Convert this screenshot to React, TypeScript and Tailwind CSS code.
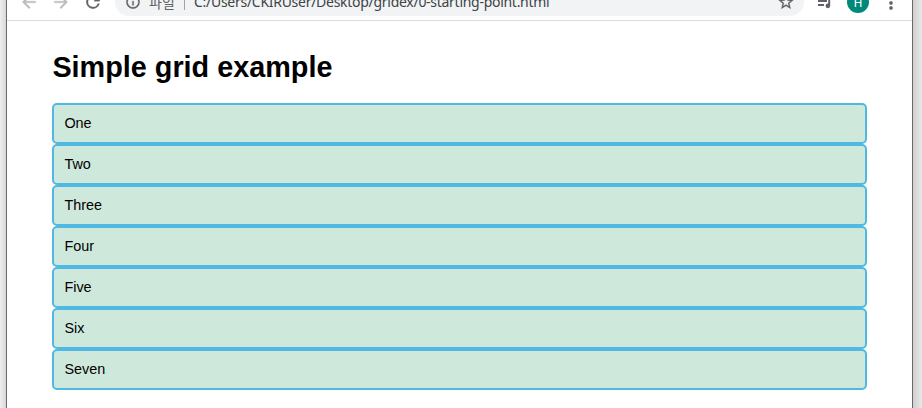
import React from "react";

const items = ["One", "Two", "Three", "Four", "Five", "Six", "Seven"];

type IconProps = { d: string; className: string };

function Icon({ d, className }: IconProps) {
  return (
    <svg viewBox="0 0 24 24" fill="currentColor" stroke="currentColor" strokeWidth="0.4" className={`shrink-0 ${className}`}>
      <path d={d} />
    </svg>
  );
}

function Toolbar() {
  return (
    <div className="-mt-4 flex h-[37px] shrink-0 items-center border-b border-[#dadce0] bg-white pl-3 text-[#5f6368]">
      <div className="flex gap-3">
        <Icon className="size-5 text-[#babcbe]" d="M20 11H7.83l5.59-5.59L12 4l-8 8 8 8 1.41-1.41L7.83 13H20v-2z" />
        <Icon className="size-5 text-[#babcbe]" d="M12 4l-1.41 1.41L16.17 11H4v2h12.17l-5.58 5.59L12 20l8-8z" />
        <Icon className="size-5" d="M17.65 6.35A7.96 7.96 0 0 0 12 4a8 8 0 1 0 7.73 10h-2.08A6 6 0 1 1 12 6c1.66 0 3.14.69 4.22 1.78L13 11h7V4l-2.35 2.35z" />
      </div>
      <div className="ml-3 flex h-7 w-[689px] items-center rounded-full bg-[#f1f3f4] pl-[10px] pr-[9px]">
        <Icon className="size-4" d="M11 7h2v2h-2zm0 4h2v6h-2zm1-9a10 10 0 1 0 0 20 10 10 0 0 0 0-20zm0 18a8 8 0 1 1 0-16 8 8 0 0 1 0 16z" />
        <span className="ml-2 w-[36px] whitespace-nowrap pb-px font-['Noto_Sans_CJK_KR',sans-serif] text-[14px] leading-5">파일</span>
        <span className="-ml-px h-4 w-px bg-[#9fa2a6]" />
        <span className="ml-[9px] whitespace-nowrap font-['Noto_Sans',sans-serif] text-[14px] leading-5 tracking-[-0.28px] text-[#404347]">
          C:/Users/CKIRUser/Desktop/gridex/0-starting-point.html
        </span>
        <Icon className="ml-auto size-[18px]" d="M22 9.24l-7.19-.62L12 2 9.19 8.63 2 9.24l5.46 4.73L5.82 21 12 17.27 18.18 21l-1.63-7.03L22 9.24zM12 15.4l-3.76 2.27 1-4.28-3.32-2.88 4.38-.38L12 6.1l1.71 4.04 4.38.38-3.32 2.88 1 4.28L12 15.4z" />
      </div>
      <svg viewBox="0 0 20 20" fill="currentColor" className="ml-[11px] size-5 shrink-0">
        <path d="M3 4h9v2H3zM3 8h9v2H3zM3 12h6v2H3zM13.2 4H17.5v2h-2.3v7.8a2.3 2.3 0 1 1-2-2.25z" />
      </svg>
      <div className="ml-3 flex size-[22px] shrink-0 items-center justify-center rounded-full bg-[#00897b] pt-px font-['Roboto',sans-serif] text-[12px] leading-none text-white">
        H
      </div>
      <Icon className="ml-3 mt-px size-5" d="M12 8a2 2 0 1 0 0-4 2 2 0 0 0 0 4zm0 2a2 2 0 1 0 0 4 2 2 0 0 0 0-4zm0 6a2 2 0 1 0 0 4 2 2 0 0 0 0-4z" />
    </div>
  );
}

export default function App() {
  return (
    <div className="flex h-[408px] w-[922px] overflow-hidden">
      <div className="w-1.5 shrink-0 bg-linear-to-r from-[#efefef] to-[#d8d8d8]" />
      <div className="flex w-[907px] shrink-0 flex-col overflow-hidden border-x border-[#69696b] bg-white">
        <Toolbar />
        <main className="pl-[45px] pt-[29px] font-['Liberation_Sans',Arial,sans-serif] text-black">
          <h1 className="pl-[0.4px] text-[28.8px] font-bold leading-[34px]">Simple grid example</h1>
          <div className="mt-[19px] w-[815px]">
            {items.map((item) => (
              <div
                key={item}
                className="h-[41px] rounded-[5px] border-2 border-[#4fb9e3] bg-[#cfe8dc] py-[10px] pl-[10.4px] text-[14.4px] leading-[17px]"
              >
                {item}
              </div>
            ))}
          </div>
        </main>
      </div>
      <div className="flex-1 bg-linear-to-r from-[#cfcfcf] to-[#e9e9e9]" />
    </div>
  );
}
